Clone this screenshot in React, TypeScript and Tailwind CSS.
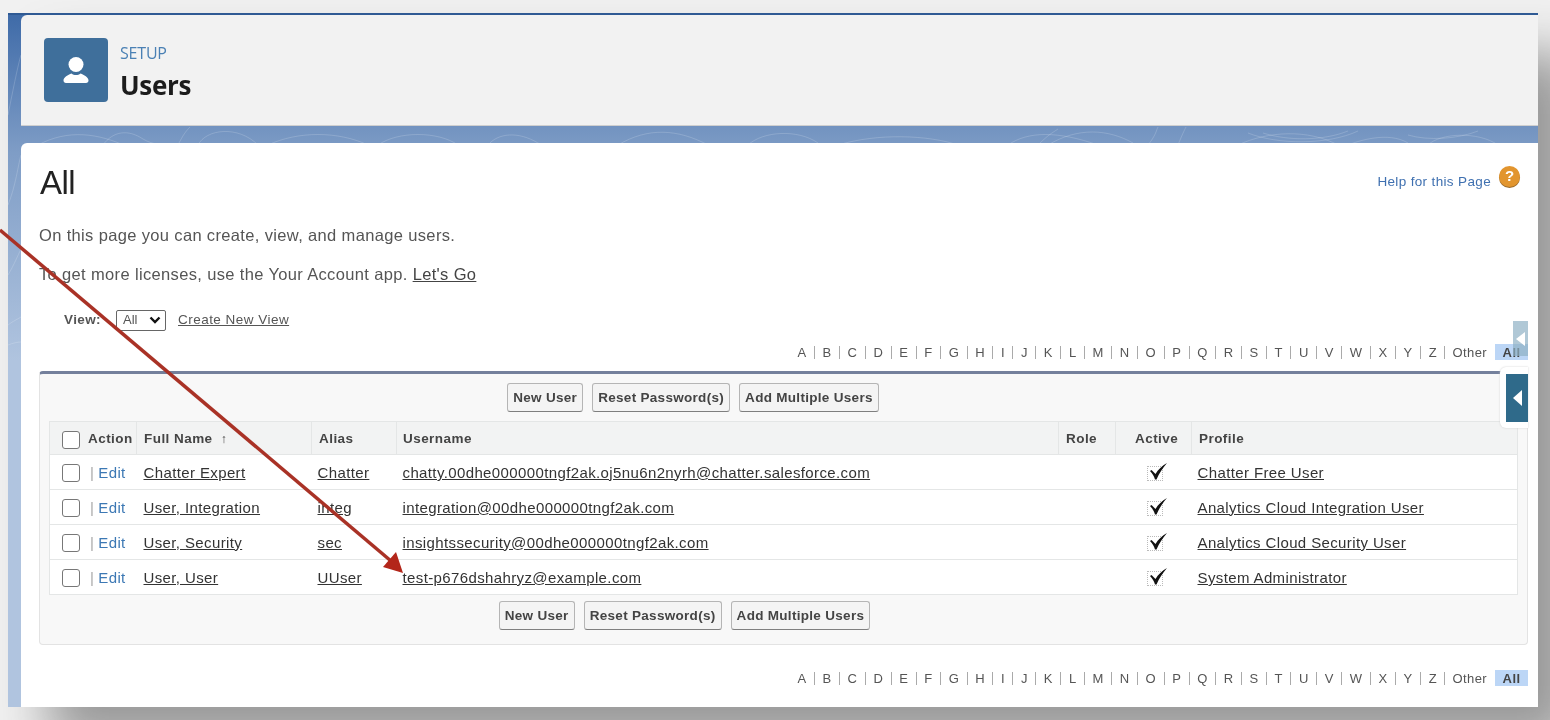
import React from "react";

const letters = "ABCDEFGHIJKLMNOPQRSTUVWXYZ".split("");

const users = [
  {
    name: "Chatter Expert",
    alias: "Chatter",
    username: "chatty.00dhe000000tngf2ak.oj5nu6n2nyrh@chatter.salesforce.com",
    profile: "Chatter Free User",
  },
  {
    name: "User, Integration",
    alias: "integ",
    username: "integration@00dhe000000tngf2ak.com",
    profile: "Analytics Cloud Integration User",
  },
  {
    name: "User, Security",
    alias: "sec",
    username: "insightssecurity@00dhe000000tngf2ak.com",
    profile: "Analytics Cloud Security User",
  },
  {
    name: "User, User",
    alias: "UUser",
    username: "test-p676dshahryz@example.com",
    profile: "System Administrator",
  },
];

const Contours = () => (
  <svg className="absolute inset-0 h-full w-full" viewBox="0 0 1530 692" fill="none">
    <g stroke="#ffffff" strokeOpacity="0.17" strokeWidth="1">
      <path d="M0 100c6-30 10-50 13-60M0 190c8-20 10-40 13-50M0 260c6-10 10-20 13-26M0 310c5-4 10-6 13-8M0 330c5-2 10-3 13-3" />
      <path d="M30 130c30-16 60-12 90 2M95 130c10-14 25-16 40-6 10 6 20 6 28 6M170 130c5-10 8-14 12-18M190 130c8-16 40-20 60 0" />
      <path d="M260 130c30-14 70-14 100 0M370 130c20-14 60-14 80 0M480 130c10-12 30-14 50-2 20 10 50 4 60 2M610 130c30-18 60-16 90 0" />
      <path d="M740 130c15-14 50-16 70-2M830 130c40-12 90-10 120 0M1000 130c20-14 50-14 90 0M1030 130c10-10 14-12 20-16" />
      <path d="M1040 130c30-18 60-16 85-2M1140 130c8-10 8-14 10-18M1170 130c4-10 6-14 8-18M1230 130c30-14 70-16 100 0M1340 130c10-4 40-14 60-2M1420 130c12-12 50-14 70 0" />
      <path d="M1240 118c30 12 80 12 110-2M1255 118c25 8 60 8 85-2M1400 120c20 6 50 4 70-4" />
    </g>
  </svg>
);

const ActionButton = ({ children }: { children: React.ReactNode }) => (
  <button className="flex h-[29px] items-center rounded-[3px] border border-[#b5b5b5] border-b-[#7f7f7f] bg-[#f4f4f4] px-[5px] pt-[2px] text-[13.5px] font-bold tracking-[0.3px] text-[#444]">
    {children}
  </button>
);

const ButtonRow = ({ className }: { className: string }) => (
  <div className={`flex justify-center gap-[9px] ${className}`}>
    <ActionButton>New User</ActionButton>
    <ActionButton>Reset Password(s)</ActionButton>
    <ActionButton>Add Multiple Users</ActionButton>
  </div>
);

const LetterNav = ({ className }: { className: string }) => (
  <div className={`flex h-4 items-center justify-end text-[13px] tracking-[0.4px] text-[#555] ${className}`}>
    {letters.map((l, i) => (
      <span
        key={l}
        className={`flex h-[13px] items-center px-[7.5px] leading-none ${i > 0 ? "border-l border-[#aaa]" : ""}`}
      >
        {l}
      </span>
    ))}
    <span className="flex h-[13px] items-center border-l border-[#aaa] px-[7px] leading-none">Other</span>
    <span className="ml-[1px] flex h-4 w-[33px] items-center justify-center bg-[#bcd6f6] font-bold leading-none text-[#444]">
      All
    </span>
  </div>
);

const TickIcon = () => (
  <span className="relative ml-[4px] inline-block h-[15px] w-4 border border-dotted border-[#bbb] align-middle">
    <svg className="absolute left-[2px] top-[-4px] h-[17px] w-[17px]" viewBox="0 0 17 17">
      <path d="M0 8 1.500 7 5.500 11C8 6.500 12 3 17 0 13 4.500 9 10.500 6.500 16.500H5C4 13 2.500 10.500 0 8Z" fill="#111" />
    </svg>
  </span>
);

const Th = ({ className, children }: { className?: string; children?: React.ReactNode }) => (
  <th className={`border-r border-[#e4e6e6] pt-[3px] text-left text-[13.5px] font-bold tracking-[0.45px] text-[#444] ${className ?? ""}`}>
    {children}
  </th>
);

export default function App() {
  return (
    <div className="relative h-[720px] w-[1550px] overflow-hidden bg-[#f1f1f1] pl-2 pt-[13px] font-['Liberation_Sans',Arial,sans-serif] blur-[0.6px]">
      <div className="relative flex h-[694px] w-[1530px] flex-col border-t-2 border-[#2f5a94] bg-gradient-to-b from-[#3f6ba8] via-[#7f9dc6] via-[20%] to-[#b0c4df] to-[50%] pl-[13px] shadow-[40px_40px_50px_#999]">
        <Contours />

        <header className="relative flex h-[111px] shrink-0 items-center gap-3 rounded-tl-md border-b border-[#cfcfcf] bg-[#f2f2f2] pl-[23px] font-['Open_Sans',sans-serif]">
          <div className="flex h-16 w-16 items-center justify-center rounded-[4px] bg-[#3f6f9b]">
            <svg className="h-8 w-8" viewBox="0 0 32 32" fill="#fff">
              <circle cx="16" cy="10.500" r="7.500" />
              <path d="M3.500 26.500C3.500 23 8 21 11.500 19.500c1.300 1 2.800 1.500 4.500 1.500s3.200-.5 4.500-1.500C24 21 28.500 23 28.500 26.500c0 1.500-1 2.500-2.500 2.500H6c-1.500 0-2.500-1-2.500-2.500Z" />
            </svg>
          </div>
          <div className="self-start pt-[28px]">
            <div className="text-[16px] leading-[20px] tracking-[-0.2px] text-[#4a80b4]">SETUP</div>
            <h1 className="mt-[6px] text-[26px] font-bold leading-[32px] tracking-[-0.3px] text-[#1c1c1c]">Users</h1>
          </div>
        </header>

        <main className="relative mt-[17px] flex-1 rounded-tl-md bg-white pl-[18px]">
          <div className="absolute right-[18px] top-[23px] flex items-start gap-2">
            <a className="mt-[6px] text-[13.5px] tracking-[0.35px] text-[#3f70b0]">Help for this Page</a>
            <span className="flex h-[21px] w-[21px] items-center justify-center rounded-full bg-[#e2952e] text-[15px] font-bold text-white shadow-[0_1px_0_#9a6a2a]">
              ?
            </span>
          </div>

          <h2 className="ml-px mt-5 h-10 text-[33px] leading-10 tracking-[-0.5px] text-[#222]">All</h2>
          <p className="mt-5 h-6 text-[16.5px] leading-6 tracking-[0.35px] text-[#555]">
            On this page you can create, view, and manage users.
          </p>
          <p className="mt-[15px] h-6 text-[16.5px] leading-6 tracking-[0.35px] text-[#555]">
            To get more licenses, use the Your Account app.{" "}
            <a className="text-[#444] underline">Let's Go</a>
          </p>

          <div className="ml-[25px] mt-[23px] flex h-[22px] items-center">
            <span className="w-[52px] text-[13.5px] font-bold tracking-[0.4px] text-[#555]">View:</span>
            <span className="flex h-[21px] w-[50px] items-center justify-between rounded-[2px] border border-[#666] pl-[6px] pr-1 text-[13px] text-[#555]">
              All
              <svg className="h-3 w-3" viewBox="0 0 12 12" fill="none" stroke="#111" strokeWidth="2.400">
                <path d="M1.500 3.500 6 8l4.500-4.500" />
              </svg>
            </span>
            <a className="ml-3 text-[13.5px] tracking-[0.47px] text-[#555] underline">Create New View</a>
          </div>

          <LetterNav className="mr-[10px] mt-[13px]" />

          <section className="mt-[11px] w-[1489px] rounded-[4px] border border-t-[3px] border-[#e3e3e3] border-t-[#74809c] bg-[#f8f8f8]">
            <ButtonRow className="pr-[181px] pt-[9px]" />
            <table className="ml-[9px] mt-[9px] w-[1469px] table-fixed border-collapse border border-[#e4e6e6] bg-white">
              <thead>
                <tr className="h-[33px] bg-[#f2f3f3]">
                  <Th className="w-[87px]">
                    <span className="flex items-center pl-[12px]">
                      <span className="mr-2 h-[18px] w-[18px] rounded-[3px] border border-[#777] bg-white" />
                      Action
                    </span>
                  </Th>
                  <Th className="w-[175px] pl-[7px]">Full Name <span className="ml-1 text-[12px]">↑</span></Th>
                  <Th className="w-[85px] pl-[7px]">Alias</Th>
                  <Th className="w-[662px] pl-[6px]">Username</Th>
                  <Th className="w-[57px] pl-[7px]">Role</Th>
                  <Th className="w-[76px] pl-[19px]">Active</Th>
                  <Th className="pl-[7px]">Profile</Th>
                </tr>
              </thead>
              <tbody className="text-[15px] tracking-[0.38px] text-[#333]">
                {users.map((u) => (
                  <tr key={u.alias} className="h-[35px] border-t border-[#e4e6e6]">
                    <td className="pl-[12px] pt-[2px]">
                      <span className="flex items-center">
                        <span className="h-[18px] w-[18px] rounded-[3px] border border-[#777]" />
                        <span className="ml-[10px] text-[#aaa]">|</span>
                        <a className="ml-[4px] text-[#3c78b4]">Edit</a>
                      </span>
                    </td>
                    <td className="pl-[7px] pt-[2px]"><a className="underline">{u.name}</a></td>
                    <td className="pl-[6px] pt-[2px]"><a className="underline">{u.alias}</a></td>
                    <td className="pl-[6px] pt-[2px]"><a className="underline">{u.username}</a></td>
                    <td />
                    <td className="pl-[27px] pt-[2px]"><TickIcon /></td>
                    <td className="pl-[6px] pt-[2px]"><a className="underline">{u.profile}</a></td>
                  </tr>
                ))}
              </tbody>
            </table>
            <ButtonRow className="pb-[14px] pr-[198px] pt-[6px]" />
          </section>

          <LetterNav className="mr-[10px] mt-[25px]" />
        </main>

        {/* side tabs sitting over the page edge */}
        <div className="absolute right-[10px] top-[306px] flex h-[35px] w-[15px] items-center justify-center bg-[#8fb0c4]/70">
          <div className="h-0 w-0 border-y-[7px] border-r-[9px] border-y-transparent border-r-white" />
        </div>
        <div className="absolute right-[10px] top-[352px] h-[61px] w-[28px] rounded-l-md bg-white pb-[6px] pl-[6px] pt-[7px] shadow-[0_0_2px_#ccc]">
          <div className="flex h-full items-center justify-center bg-[#2f6a8a]">
            <div className="h-0 w-0 border-y-[8px] border-r-[9px] border-y-transparent border-r-white" />
          </div>
        </div>
      </div>

      {/* red callout arrow */}
      <svg className="absolute inset-0 h-full w-full" viewBox="0 0 1550 720" fill="none">
        <path d="M0 230 391 561" stroke="#a93226" strokeWidth="3.500" />
        <path d="M403 573 383 567 396 552Z" fill="#b3261a" />
      </svg>
    </div>
  );
}
